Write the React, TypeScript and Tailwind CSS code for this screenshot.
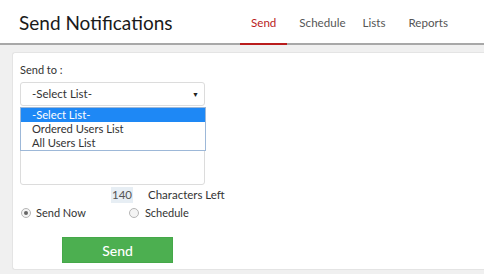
const tabs = [
  { label: 'Send', cls: 'ml-0 px-[11px] border-[#b91c1c] text-[#b91c1c]' },
  { label: 'Schedule', cls: 'ml-[12px] border-transparent text-[#555]' },
  { label: 'Lists', cls: 'ml-[17px] border-transparent text-[#555]' },
  { label: 'Reports', cls: 'ml-[23px] border-transparent text-[#555]' },
];
const options = ['-Select List-', 'Ordered Users List', 'All Users List'];

function Radio({ checked }: { checked: boolean }) {
  return (
    <span className="flex h-[10px] w-[10px] items-center justify-center rounded-full border border-[#b5b5b5] bg-[#f4f4f4]">
      {checked ? <span className="h-[4px] w-[4px] rounded-full bg-[#666]" /> : null}
    </span>
  );
}

export default function App() {
  return (
    <div className="flex h-[274px] w-[484px] flex-col bg-[#f0f0f0] text-[#333]" style={{ fontFamily: 'Lato, "Open Sans", sans-serif' }}>
      <header className="flex h-[45px] shrink-0 items-end border-b-2 border-[#a8a8a8] bg-white">
        <h1 className="mb-[11px] ml-[19px] w-[221px] shrink-0 text-[19px] leading-none text-[#1a1a1a]">Send Notifications</h1>
        <nav className="flex h-full shrink-0 items-stretch">
          {tabs.map((tab) => (
            <div key={tab.label} className={`-mb-[2px] flex items-center border-b-2 pt-[3px] text-[11.6px] ${tab.cls}`}>
              {tab.label}
            </div>
          ))}
        </nav>
      </header>

      <div className="flex flex-1 pb-[4px] pl-[12px] pt-[7px]">
        <main className="flex-1 rounded-l-[3px] border border-r-0 border-[#e4e4e4] bg-white pl-[7px] pt-[10px]">
          <p className="text-[11px] leading-[14px]">Send to :</p>

          <div className="relative mt-[5px] w-[185px]">
            <div className="flex h-[24px] items-center justify-between rounded-[3px] border border-[#dcdcdc] pl-[11px] pr-[5px] text-[11.5px]">
              <span>-Select List-</span>
              <span className="text-[7px] text-[#222]">▼</span>
            </div>
            <div className="mt-[1px] h-[78px] rounded-[3px] border border-[#dcdcdc]" />

            <ul className="absolute left-0 top-[25px] w-[186px] border border-[#9db8d8] bg-white text-[11.2px] leading-[14px]">
              {options.map((opt, i) => (
                <li key={opt} className={`pl-[11px] ${i === 0 ? 'bg-[#1e88f5] text-white' : ''}`}>
                  {opt}
                </li>
              ))}
            </ul>
          </div>

          <div className="mt-[2px] flex items-center text-[11.5px] leading-[16px]">
            <span className="ml-[91px] bg-[#e7eef4] px-[1px] text-[#555]">140</span>
            <span className="ml-[15px]">Characters Left</span>
          </div>

          <div className="mt-[2px] flex items-center text-[11px] leading-[16px]">
            <span className="ml-[1px]"><Radio checked /></span>
            <span className="ml-[5px]">Send Now</span>
            <span className="ml-[43px]"><Radio checked={false} /></span>
            <span className="ml-[6px]">Schedule</span>
          </div>

          <button
            type="button"
            className="ml-[42px] mt-[16px] h-[26px] w-[111px] border border-[#45a849] bg-[#4caf50] text-[14px] font-medium text-white"
          >
            Send
          </button>
        </main>
      </div>
    </div>
  );
}
